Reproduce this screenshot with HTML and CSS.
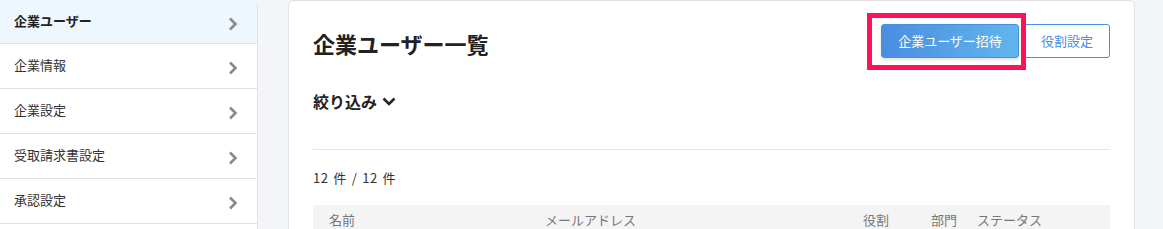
FILE: index.html
```html
<!DOCTYPE html>
<html lang="ja">
<head>
<meta charset="utf-8">
<title>企業ユーザー一覧</title>
<link rel="stylesheet" href="styles.css">
</head>
<body>
<div class="layout">
  <nav class="sidebar">
    <a class="nav-item active"><span>企業ユーザー</span><svg class="chev" viewBox="0 0 10 14" width="10" height="14"><polyline points="2,1.5 7.5,7 2,12.5"/></svg></a>
    <a class="nav-item"><span>企業情報</span><svg class="chev" viewBox="0 0 10 14" width="10" height="14"><polyline points="2,1.5 7.5,7 2,12.5"/></svg></a>
    <a class="nav-item"><span>企業設定</span><svg class="chev" viewBox="0 0 10 14" width="10" height="14"><polyline points="2,1.5 7.5,7 2,12.5"/></svg></a>
    <a class="nav-item"><span>受取請求書設定</span><svg class="chev" viewBox="0 0 10 14" width="10" height="14"><polyline points="2,1.5 7.5,7 2,12.5"/></svg></a>
    <a class="nav-item"><span>承認設定</span><svg class="chev" viewBox="0 0 10 14" width="10" height="14"><polyline points="2,1.5 7.5,7 2,12.5"/></svg></a>
  </nav>
  <main class="card">
    <div class="header">
      <h1 class="title">企業ユーザー一覧</h1>
      <div class="actions">
        <span class="highlight-wrap">
          <button class="btn btn-primary">企業ユーザー招待</button>
          <span class="highlight"></span>
        </span>
        <button class="btn btn-outline">役割設定</button>
      </div>
    </div>
    <div class="filter">
      <span>絞り込み</span>
      <svg class="chev-down" viewBox="0 0 14 9" width="14" height="9"><polyline points="1.5,1.5 7,7 12.5,1.5"/></svg>
    </div>
    <div class="divider"></div>
    <div class="count">12 件 / 12 件</div>
    <div class="table-head">
      <span>名前</span>
      <span>メールアドレス</span>
      <span>役割</span>
      <span>部門</span>
      <span>ステータス</span>
    </div>
  </main>
</div>
</body>
</html>
```
FILE: styles.css
```css
* { box-sizing: border-box; }
html, body { margin: 0; padding: 0; }
body {
  background: #f4f5f9;
  font-family: "Noto Sans CJK JP", "Noto Sans", sans-serif;
  color: #333;
  width: 1163px;
  height: 229px;
  overflow: hidden;
}
.layout {
  display: flex;
  align-items: flex-start;
  gap: 30px;
}
.sidebar {
  width: 258px;
  flex: none;
  height: 240px;
  background: #fff;
  border-right: 1px solid #e2e2e2;
  border-top-right-radius: 6px;
  overflow: hidden;
  display: flex;
  flex-direction: column;
}
.nav-item {
  height: 45px;
  flex: none;
  display: flex;
  align-items: center;
  justify-content: space-between;
  padding: 0 19px 0 14px;
  border-bottom: 1px solid #e2e2e2;
  font-size: 13px;
  line-height: 20px;
  color: #333;
}
.nav-item span { position: relative; top: -1px; }
.nav-item.active {
  background: #eef6fe;
  font-weight: bold;
  color: #222;
  height: 44px;
}
.chev {
  display: block;
  margin-top: 4px;
}
.chev polyline {
  fill: none;
  stroke: #8a8a8a;
  stroke-width: 2.6;
  stroke-linecap: butt;
  stroke-linejoin: miter;
}
.card {
  width: 847px;
  flex: none;
  height: 240px;
  background: #fff;
  border: 1px solid #e2e2e2;
  border-radius: 6px;
  padding: 23px 24px 0;
}
.header {
  display: flex;
  justify-content: space-between;
  align-items: center;
  height: 34px;
}
.title {
  margin: 0;
  font-size: 22px;
  line-height: 34px;
  font-weight: bold;
  color: #222;
  padding-top: 3px;
}
.actions {
  display: flex;
  gap: 5px;
  align-items: center;
}
.highlight-wrap {
  position: relative;
  display: block;
}
.btn {
  font-family: inherit;
  font-size: 13px;
  line-height: 20px;
  height: 34px;
  border-radius: 3px;
  padding: 0;
  cursor: pointer;
  display: block;
}
.btn-primary {
  width: 138px;
  color: #fff;
  border: 1px solid #4a8ee0;
  background: linear-gradient(90deg, #4a8ee0 0%, #62b5ec 100%);
  box-shadow: 0 2px 3px rgba(0, 0, 0, 0.12);
}
.btn-outline {
  width: 86px;
  color: #4a8ee0;
  background: #fff;
  border: 1px solid #4a8ee0;
}
.highlight {
  position: absolute;
  top: -11px;
  bottom: -12px;
  left: -14px;
  right: -7px;
  border: 5px solid #ff1158;
  z-index: 2;
  pointer-events: none;
}
.filter {
  margin-top: 31px;
  display: flex;
  align-items: center;
  gap: 5px;
  font-size: 16px;
  font-weight: bold;
  line-height: 24px;
  color: #222;
}
.chev-down polyline {
  fill: none;
  stroke: #222;
  stroke-width: 2.6;
}
.chev-down { display: block; margin-top: 1px; }
.divider {
  margin-top: 36px;
  height: 1px;
  background: #e4e4e4;
}
.count {
  margin-top: 18px;
  font-size: 13px;
  line-height: 20px;
  color: #333;
  letter-spacing: 0.5px;
  word-spacing: 1.5px;
}
.table-head {
  margin-top: 17px;
  background: #f4f4f4;
  height: 34px;
  display: grid;
  grid-template-columns: 216px 318px 68px 46px 1fr;
  padding-left: 16px;
  font-size: 13px;
  line-height: 30px;
  color: #777;
}
```
